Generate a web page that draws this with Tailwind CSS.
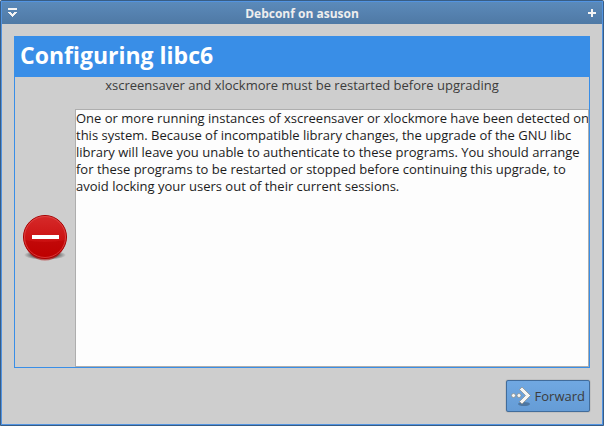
<!DOCTYPE html>
<html lang="en">
  <head>
    <meta charset="UTF-8" />
    <meta name="viewport" content="width=device-width, initial-scale=1.0" />
    <title>Debconf on asuson</title>
    <script src="https://cdn.jsdelivr.net/npm/@tailwindcss/browser@4"></script>
  </head>
  <body class="h-screen bg-[#cecece] font-['Open_Sans','Noto_Sans',sans-serif] text-[13px] leading-[17px] text-[#3c3c3c]">
    <div class="flex h-full flex-col border border-[#385d85] rounded-t-xs">
      <div class="flex min-h-0 flex-1 flex-col border border-[#5294e2]">
        <header class="grid h-[22px] shrink-0 grid-cols-[1fr_auto_1fr] items-center bg-linear-to-b from-[#5b8aba] to-[#4f79a5] px-1">
          <button aria-label="Window menu" class="justify-self-start">
            <svg class="h-4 w-4" viewBox="0 0 16 16" fill="none" stroke="#f4f4f4" shape-rendering="crispEdges">
              <path d="M2 4h9" stroke-width="2" />
              <path d="M2 7h3v1h1v1h1v-1h1v-1h3v1h-1v1h-1v1h-1v1h-1v1h-1v-1h-1v-1h-1v-1h-1v-1h-1z" fill="#f4f4f4" stroke="none" />
            </svg>
          </button>
          <h1 class="text-[12px] font-bold text-[#eeeeee]">Debconf on asuson</h1>
          <button aria-label="Maximize" class="justify-self-end">
            <svg class="h-4 w-4" viewBox="0 0 16 16" fill="none" stroke="#f4f4f4" stroke-width="2" shape-rendering="crispEdges">
              <path d="M6 8h8M10 4v8" />
            </svg>
          </button>
        </header>

        <main class="flex min-h-0 flex-1 flex-col gap-3 p-3">
          <section class="flex min-h-0 flex-1 flex-col border border-[#398ee7]">
            <h2 class="bg-[#398ee7] px-[5px] pt-1 pb-2 text-[23px] leading-[28px] font-bold text-white">Configuring libc6</h2>
            <label for="message" class="text-center">xscreensaver and xlockmore must be restarted before upgrading</label>
            <div class="mt-[15px] flex min-h-0 flex-1 items-center">
              <div class="flex w-[60px] shrink-0 justify-center pb-0.5">
                <svg class="h-12 w-12" viewBox="0 0 48 48">
                  <defs>
                    <linearGradient id="red" x1="0" y1="0" x2="0" y2="1">
                      <stop offset="0" stop-color="#d62a2a" />
                      <stop offset="1" stop-color="#c40000" />
                    </linearGradient>
                    <radialGradient id="shade">
                      <stop offset="0.6" stop-color="#000" stop-opacity="0.5" />
                      <stop offset="1" stop-color="#000" stop-opacity="0" />
                    </radialGradient>
                  </defs>
                  <ellipse cx="24" cy="42" rx="21" ry="5" fill="url(#shade)" />
                  <circle cx="24" cy="24" r="21.5" fill="url(#red)" stroke="#a80000" />
                  <path d="M3.5 27Q24 31 44.5 27A20.500 20.500 0 0 1 3.500 27z" fill="#b80000" opacity="0.5" />
                  <circle cx="24" cy="24" r="20.500" fill="none" stroke="#e65a5a" stroke-opacity="0.6" />
                  <path d="M11 22h27v4H11z" fill="#fff" />
                </svg>
              </div>
              <textarea id="message" readonly wrap="off" class="h-full min-w-0 flex-1 resize-none overflow-hidden border border-[#aeaeae] bg-[#fdfdfd] whitespace-pre text-[#1c1c1c] outline-none">One or more running instances of xscreensaver or xlockmore have been detected on
this system. Because of incompatible library changes, the upgrade of the GNU libc
library will leave you unable to authenticate to these programs. You should arrange
for these programs to be restarted or stopped before continuing this upgrade, to
avoid locking your users out of their current sessions.</textarea>
            </div>
          </section>

          <div class="flex justify-end">
            <button class="flex h-8 items-center gap-1 rounded-xs border border-[#416c9b] bg-linear-to-b from-[#70a8e2] to-[#659cd6] px-1 shadow-[0_0_1px_#555]">
              <svg class="h-6 w-5" viewBox="0 0 20 24">
                <ellipse cx="13" cy="20" rx="6" ry="2" fill="#000" opacity="0.25" />
                <g fill="#f6f6f4" stroke="#888a85" stroke-width="0.7">
                  <circle cx="2.500" cy="11.500" r="2" />
                  <circle cx="8" cy="11.500" r="2" />
                  <path d="M8.500 5.500l2.500-2.500 8.500 8.500-8.500 8.500-2.500-2.500 6-6z" stroke-linejoin="round" />
                </g>
              </svg>
              Forward
            </button>
          </div>
        </main>
      </div>
    </div>
  </body>
</html>
